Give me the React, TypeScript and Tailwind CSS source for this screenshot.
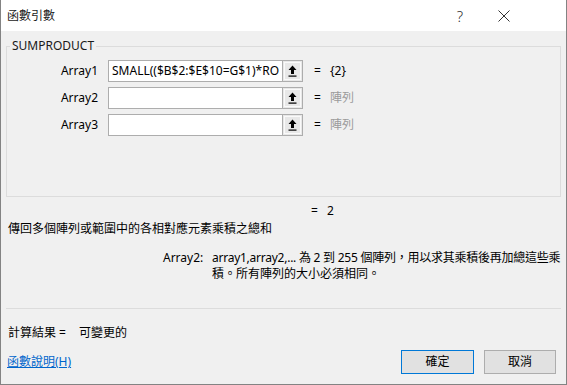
import React from 'react'

const font = { fontFamily: '"Noto Sans", "Noto Sans CJK TC", sans-serif' }

function PickButton() {
  return (
    <div className="w-[21px] h-[22px] border border-[#adadad] bg-[#e8e8e8] flex items-center justify-center">
      <div className="w-[17px] h-[18px] border border-[#fafafa] flex items-center justify-center">
        <svg width="9" height="12" viewBox="0 0 9 12">
          <path d="M4.5 0.5 L8.5 5 L6 5 L6 9 L3 9 L3 5 L0.5 5 Z" fill="#000" />
          <rect x="0.5" y="10.5" width="8" height="1.2" fill="#000" />
        </svg>
      </div>
    </div>
  )
}

type Row = { label: string; value?: string; result: string; muted?: boolean }

const rows: Row[] = [
  { label: 'Array1', value: 'SMALL(($B$2:$E$10=G$1)*RO', result: '{2}' },
  { label: 'Array2', result: '陣列', muted: true },
  { label: 'Array3', result: '陣列', muted: true },
]

function ArgRow({ row }: { row: Row }) {
  return (
    <div className="flex items-center h-[22px]">
      <span className="w-[92px] pr-[1px] text-right">{row.label}</span>
      <div className="ml-[9px] w-[174px] h-[22px] border border-r-0 border-[#adadad] bg-white flex items-center pl-[3px] overflow-hidden whitespace-nowrap">
        {row.value}
      </div>
      <PickButton />
      <span className="ml-[11px] w-[16px]">=</span>
      <span className={row.muted ? 'text-[#9b9b9b]' : 'text-black'}>{row.result}</span>
    </div>
  )
}

export default function App() {
  return (
    <div
      className="w-[567px] h-[385px] bg-[#f0f0f0] border-l border-r border-b border-[#838383] flex flex-col text-[12px] text-black leading-[16px] overflow-hidden"
      style={font}
    >
      <div className="h-[31px] bg-white flex items-center pl-[6px] shrink-0">
        <span className="text-[12px] text-[#1a1a1a]">函數引數</span>
        <span className="ml-auto text-[15px] text-[#333] mr-[35px] font-light">?</span>
        <svg width="12" height="12" viewBox="0 0 12 12" className="mr-[56px]">
          <path d="M0.5 0.5 L11.5 11.5 M11.5 0.5 L0.5 11.5" stroke="#333" strokeWidth="1" />
        </svg>
      </div>

      <div className="flex flex-col px-[5px]">
        <div className="relative mt-[15px] h-[151px] border border-[#dcdcdc] pt-[13px] flex flex-col gap-[5px]">
          <span className="absolute left-[3px] top-[-9px] bg-[#f0f0f0] px-[2px] text-[#1a1a1a]">SUMPRODUCT</span>
          {rows.map(r => (
            <ArgRow key={r.label} row={r} />
          ))}
        </div>

        <div className="mt-[6px] pl-[305px] flex">
          <span className="w-[16px]">=</span>
          <span>2</span>
        </div>
        <div className="mt-[2px] pl-[2px]">傳回多個陣列或範圍中的各相對應元素乘積之總和</div>
        <div className="mt-[13px] flex">
          <span className="w-[206px] shrink-0 pl-[157px]">Array2:</span>
          <div className="flex flex-col whitespace-nowrap">
            <span className="tracking-[-0.25px]">array1,array2,... 為 2 到 255 個陣列，用以求其乘積後再加總這些乘</span>
            <span>積。所有陣列的大小必須相同。</span>
          </div>
        </div>

        <div className="mt-[26px] h-px bg-[#dcdcdc]" />

        <div className="mt-[16px] flex pl-[2px]">
          <span className="w-[71px]">計算結果 =</span>
          <span>可變更的</span>
        </div>

        <div className="mt-[9px] flex items-center">
          <a className="ml-[1px] text-[#0066cc] underline">函數說明(H)</a>
          <button className="ml-auto w-[73px] h-[24px] border border-[#0078d7] bg-[#e1e1e1]">確定</button>
          <button className="ml-[10px] mr-[5px] w-[72px] h-[24px] border border-[#adadad] bg-[#e1e1e1]">取消</button>
        </div>
      </div>
    </div>
  )
}
